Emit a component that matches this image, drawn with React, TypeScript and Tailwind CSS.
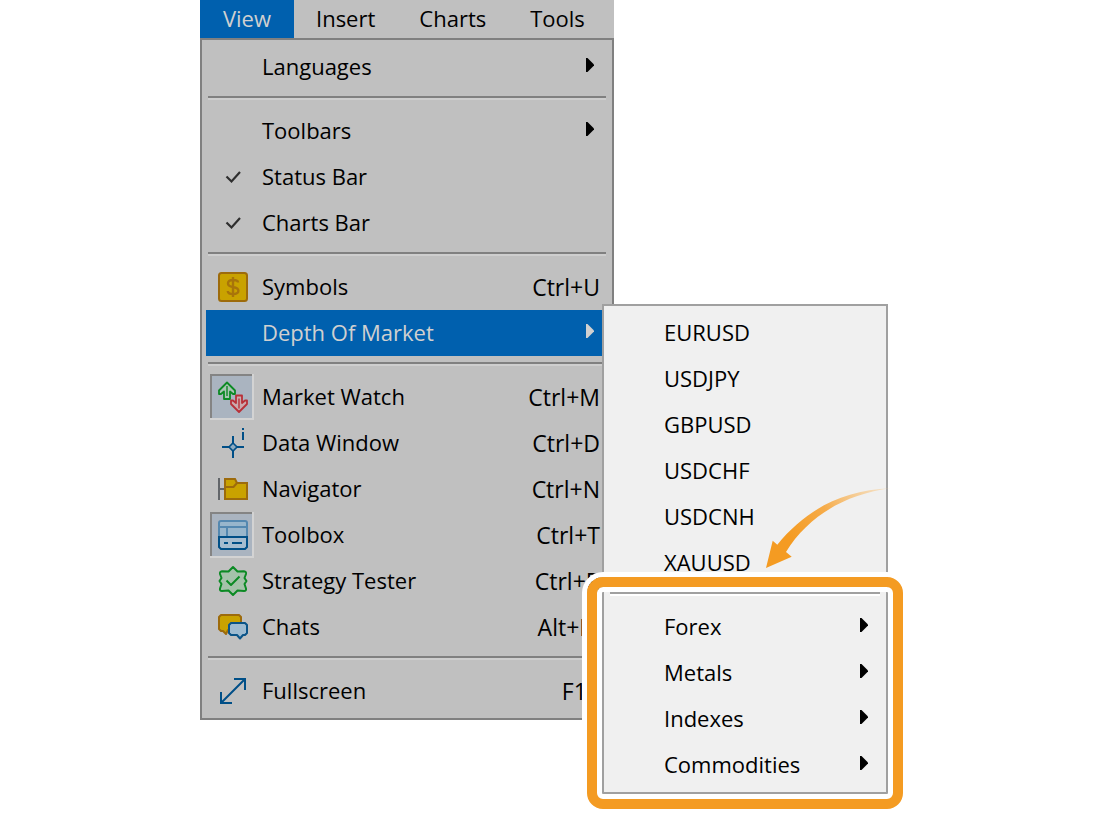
import type { ReactNode } from "react";

const check = (
  <path d="M20.5 22.5 L25.5 27.5 L34 18" fill="none" stroke="#2e2e2e" strokeWidth="2.2" />
);

const symbolsIcon = (
  <>
    <rect x="13" y="9" width="28" height="28" rx="2.5" fill="#c9a200" stroke="#9d6b0c" strokeWidth="2" />
    <path
      d="M27 13V33 M32 18.5C32 16.5 30 16 27 16C24 16 22 17 22 19.5C22 22 24 22.5 27 23C30 23.5 32.4 24.2 32.4 26.8C32.4 29.2 30 30 27 30C24 30 21.8 29.2 21.8 27"
      fill="none"
      stroke="#a8740a"
      strokeWidth="2.4"
    />
  </>
);

const marketIcon = (
  <g strokeWidth="1.8" strokeLinejoin="round">
    <path d="M21 8.500L29 16.500V20H27L24 17.500V25H18V17.500L15 20H13V16.500Z" fill="#a9c4b4" stroke="#0c8a24" />
    <path d="M21 12V22" stroke="#0c8a24" strokeWidth="1.400" />
    <path d="M33 38L41 30V26.500H39L36 29V21.500H30V29L27 26.500H25V30Z" fill="#cba9ad" stroke="#b83038" />
    <path d="M33 34.500V24.500" stroke="#b83038" strokeWidth="1.400" />
  </g>
);

const dataIcon = (
  <g fill="none" stroke="#004f87" strokeWidth="2">
    <path d="M16 27H25 M29 27H38 M27 16V25 M27 29V38" />
    <path d="M27 23L31 27L27 31L23 27Z" fill="#8fabc0" strokeWidth="1.600" />
    <path d="M37 8V10 M37 12V20" />
  </g>
);

const navigatorIcon = (
  <g strokeWidth="2">
    <path d="M13 12V34 M13 23H18" fill="none" stroke="#63666a" />
    <path d="M19 13H29L31 17H41V33H19Z" fill="#c9a200" stroke="#9d6b0c" />
    <path d="M19 21H27.500L31 17" fill="none" stroke="#9d6b0c" />
  </g>
);

const toolboxIcon = (
  <g strokeWidth="2">
    <path d="M13 25V11Q13 9 15 9H39Q41 9 41 11V25Z" fill="#98b6cc" stroke="#5488b0" />
    <path d="M13 15H41 M21 15V24" fill="none" stroke="#5488b0" />
    <path d="M13 25H41V35L39 37H15L13 35Z" fill="#a5bccf" stroke="#004f87" />
    <path d="M18 31H22 M26 31H36" fill="none" stroke="#004f87" />
  </g>
);

const testerIcon = (
  <g stroke="#0c8a24" strokeWidth="2" strokeLinejoin="round">
    <path
      d="M27 9L31.500 13.500L38 13.200Q40.500 13.500 40 16L38.500 20L40.500 23L38.500 26L40 30.500Q40.500 33 38 33L31.500 32.500L27 37L22.500 32.500L16 33Q13.500 33 14 30.500L15.500 26L13.500 23L15.500 20L14 16Q13.500 13.500 16 13.200L22.500 13.500Z"
      fill="#a5c2aa"
    />
    <path d="M20.500 22.500L25 27L33.500 18.500" fill="none" />
  </g>
);

const chatsIcon = (
  <g strokeWidth="2" strokeLinejoin="round">
    <path d="M15 11H33L35 13V26H22L20 30L17 27H15L13 25V13Z" fill="#c9a200" stroke="#9d6b0c" />
    <path d="M25 19H39L41 21V29L39 31H37L34 34.500L31 31H25L23 29V21Z" fill="#9ebbd0" stroke="#0b5488" />
  </g>
);

const fullscreenIcon = (
  <path d="M15 35L39 11 M28 11H39V22 M15 24V35H26" fill="none" stroke="#004f87" strokeWidth="2" />
);

type Item = {
  label: string;
  shortcut?: string;
  arrow?: boolean;
  icon?: ReactNode;
  pressed?: boolean;
  active?: boolean;
};

const groups: Item[][] = [
  [{ label: "Languages", arrow: true }],
  [
    { label: "Toolbars", arrow: true },
    { label: "Status Bar", icon: check },
    { label: "Charts Bar", icon: check },
  ],
  [
    { label: "Symbols", shortcut: "Ctrl+U", icon: symbolsIcon },
    { label: "Depth Of Market", arrow: true, active: true },
  ],
  [
    { label: "Market Watch", shortcut: "Ctrl+M", icon: marketIcon, pressed: true },
    { label: "Data Window", shortcut: "Ctrl+D", icon: dataIcon },
    { label: "Navigator", shortcut: "Ctrl+N", icon: navigatorIcon },
    { label: "Toolbox", shortcut: "Ctrl+T", icon: toolboxIcon, pressed: true },
    { label: "Strategy Tester", shortcut: "Ctrl+R", icon: testerIcon },
    { label: "Chats", shortcut: "Alt+M", icon: chatsIcon },
  ],
  [{ label: "Fullscreen", shortcut: "F11", icon: fullscreenIcon }],
];

const symbols = ["EURUSD", "USDJPY", "GBPUSD", "USDCHF", "USDCNH", "XAUUSD"];
const folders = ["Forex", "Metals", "Indexes", "Commodities"];

function MenuRow({ item }: { item: Item }) {
  return (
    <button
      type="button"
      className={`flex h-[46px] w-full items-center whitespace-nowrap text-left ${
        item.active ? "bg-[#0060ae] text-[#d0d0d0]" : ""
      }`}
    >
      <span className="flex h-full w-14 shrink-0">
        {item.icon && (
          <svg viewBox="0 0 56 46" className="h-full w-full" aria-hidden="true">
            {item.pressed && (
              <>
                <rect x="4" y="0" width="44" height="46" fill="#d3d3d3" />
                <path d="M4 0H46V2H6V44H4Z" fill="#848484" />
                <rect x="6" y="2" width="40" height="42" fill="#aab4c0" />
              </>
            )}
            {item.icon}
          </svg>
        )}
      </span>
      <span className="grow pb-0.5">{item.label}</span>
      {item.shortcut && <span className="pr-2 text-[23px]">{item.shortcut}</span>}
      {item.arrow && (
        <svg viewBox="0 0 8 18" className="mr-3.5 h-[18px] w-2" fill="currentColor" aria-hidden="true">
          <path d="M0 0H1.500L8 6.500V7.500L1.500 14H0Z" />
        </svg>
      )}
    </button>
  );
}

function Separator({ light = false }: { light?: boolean }) {
  return (
    <div className="px-0.5 py-1.5">
      <div className={`h-1.5 border-t-2 ${light ? "border-[#a0a0a0]" : "border-[#808080]"}`}>
        <div className={`h-0.5 ${light ? "bg-white" : "bg-[#cecece]"}`} />
      </div>
    </div>
  );
}

function SwooshArrow() {
  return (
    <svg viewBox="0 0 130 88" className="pointer-events-none absolute left-[160px] top-[178px] h-[88px] w-[130px]" aria-hidden="true">
      <defs>
        <linearGradient id="swoosh" gradientUnits="userSpaceOnUse" x1="30" y1="60" x2="127" y2="4">
          <stop offset="0" stopColor="#f49b22" />
          <stop offset="0.4" stopColor="#f6ac4a" />
          <stop offset="1" stopColor="#f9cf94" stopOpacity="0.4" />
        </linearGradient>
      </defs>
      <path
        d="M2 84L8.700 56.700L13.300 60.700C40 28 76 6 126.700 4.300C82 10 44 32 22 68L27.700 72.700Z"
        fill="url(#swoosh)"
      />
    </svg>
  );
}

function DepthSubmenu() {
  return (
    <div className="absolute left-[396px] top-[-6px] z-10 w-[286px] border-2 border-[#a0a0a0] bg-[#f0f0f0] p-1 text-black">
      {symbols.map((label) => (
        <MenuRow key={label} item={{ label }} />
      ))}
      <div className="relative">
        <div className="pointer-events-none absolute -bottom-[21px] -left-[21px] -right-[21px] -top-[9px] rounded-2xl border-[10px] border-[#f49b22] shadow-[0_0_0_5px_#fff,inset_0_0_0_5px_#fff]" />
        <Separator light />
        {folders.map((label) => (
          <MenuRow key={label} item={{ label, arrow: true }} />
        ))}
      </div>
      <SwooshArrow />
    </div>
  );
}

export default function App() {
  return (
    <main className="min-h-screen bg-white pl-[200px] font-['Open_Sans','Noto_Sans',sans-serif] text-[22px] leading-[30px] text-black">
      <div className="w-[414px] bg-[#c0c0c0]">
        <nav className="flex h-[38px] items-center">
          <button type="button" className="h-full w-[94px] bg-[#0060ae] pb-0.5 text-[#d0d0d0]">View</button>
          <button type="button" className="h-full px-[22px] pb-0.5">Insert</button>
          <button type="button" className="h-full px-[22px] pb-0.5">Charts</button>
          <button type="button" className="h-full px-[22px] pb-0.5">Tools</button>
        </nav>
        <div className="border-2 border-[#808080] p-1">
          {groups.map((group, index) => (
            <div key={group[0].label}>
              {index > 0 && <Separator />}
              {group.map((item) => (
                <div key={item.label} className="relative">
                  <MenuRow item={item} />
                  {item.active && <DepthSubmenu />}
                </div>
              ))}
            </div>
          ))}
        </div>
      </div>
    </main>
  );
}
